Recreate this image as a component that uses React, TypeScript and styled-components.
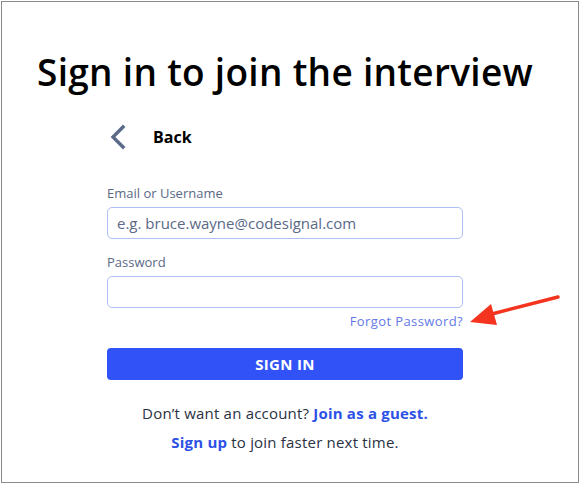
import React from "react";
import styled, { createGlobalStyle } from "styled-components";

const GlobalStyle = createGlobalStyle`
  html, body {
    margin: 0;
    padding: 0;
    background: #ffffff;
  }
  body {
    font-family: "Open Sans", "Liberation Sans", sans-serif;
  }
`;

const App: React.FC = () => {
  return (
    <>
      <GlobalStyle />
      <Frame>
        <Title>Sign in to join the interview</Title>
        <Form>
          <BackRow>
            <BackIcon width="18" height="26" viewBox="0 0 18 26">
              <path d="M14 3 L4 13 L14 23" fill="none" stroke="#5b6a86" strokeWidth="3.4" strokeLinecap="square" />
            </BackIcon>
            <BackText>Back</BackText>
          </BackRow>

          <Field $first>
            <Label>Email or Username</Label>
            <Input placeholder="e.g. bruce.wayne@codesignal.com" />
          </Field>

          <Field>
            <Label>Password</Label>
            <Input type="password" />
          </Field>
          <ForgotRow>
            <ForgotLink>Forgot Password?</ForgotLink>
          </ForgotRow>

          <SignInButton>SIGN IN</SignInButton>

          <Footer>
            <FooterLine>
              Don’t want an account? <StrongLink>Join as a guest.</StrongLink>
            </FooterLine>
            <FooterLine>
              <StrongLink>Sign up</StrongLink> to join faster next time.
            </FooterLine>
          </Footer>
        </Form>

        <Arrow width="100" height="40" viewBox="0 0 100 40">
          <line x1="94" y1="5" x2="24" y2="23" stroke="#f5341f" strokeWidth="3.4" strokeLinecap="round" />
          <polygon points="6,30 27,12 33,33" fill="#f5341f" />
        </Arrow>
      </Frame>
    </>
  );
};

export default App;

// ===== styled-components =====

const Frame = styled.div`
  position: relative;
  box-sizing: border-box;
  margin: 1px 0 0 1px;
  width: 578px;
  height: 482px;
  padding-right: 10px;
  border: 1px solid #8a8a8a;
  display: flex;
  flex-direction: column;
  align-items: center;
`;

const Title = styled.h1`
  margin: 45px 0 0 0;
  font-family: "Open Sans", "Liberation Sans", sans-serif;
  font-size: 37px;
  font-weight: 600;
  line-height: 50px;
  color: #000;
  letter-spacing: 0.3px;
  white-space: nowrap;
`;

const Form = styled.div`
  width: 356px;
  margin-top: 27px;
  display: flex;
  flex-direction: column;
`;

const BackRow = styled.div`
  display: flex;
  align-items: center;
  height: 26px;
  margin-left: 2px;
`;

const BackIcon = styled.svg`
  display: block;
`;

const BackText = styled.span`
  margin-left: 26px;
  font-size: 16px;
  font-weight: 700;
  color: #000;
`;

const Field = styled.div<{ $first?: boolean }>`
  display: flex;
  flex-direction: column;
  margin-top: ${(p) => (p.$first ? "34px" : "14px")};
`;

const Label = styled.label`
  font-size: 13px;
  font-weight: 500;
  line-height: 18px;
  color: #5a6986;
  margin-bottom: 5px;
`;

const Input = styled.input`
  box-sizing: border-box;
  height: 32px;
  width: 100%;
  border: 1px solid #aebff6;
  border-radius: 5px;
  padding: 0 9px;
  font-family: "Open Sans", "Liberation Sans", sans-serif;
  font-size: 15px;
  color: #2a3142;
  outline: none;
  &::placeholder {
    color: #5a6986;
  }
`;

const ForgotRow = styled.div`
  display: flex;
  justify-content: flex-end;
  margin-top: 4px;
`;

const ForgotLink = styled.a`
  font-size: 13px;
  line-height: 18px;
  color: #6479e8;
  letter-spacing: 0.4px;
  cursor: pointer;
`;

const SignInButton = styled.button`
  margin-top: 18px;
  height: 32px;
  width: 100%;
  border: none;
  border-radius: 4px;
  background: #3052f6;
  color: #fff;
  font-family: "Open Sans", "Liberation Sans", sans-serif;
  font-size: 15px;
  font-weight: 700;
  letter-spacing: 0.3px;
`;

const Footer = styled.div`
  margin-top: 23px;
  display: flex;
  flex-direction: column;
  align-items: center;
  gap: 9px;
`;

const FooterLine = styled.p`
  margin: 0;
  font-size: 15px;
  line-height: 20px;
  color: #2a3142;
  letter-spacing: 0.2px;
`;

const StrongLink = styled.a`
  font-weight: 700;
  color: #2d50e6;
  cursor: pointer;
`;

const Arrow = styled.svg`
  position: absolute;
  left: 462px;
  top: 290px;
`;
